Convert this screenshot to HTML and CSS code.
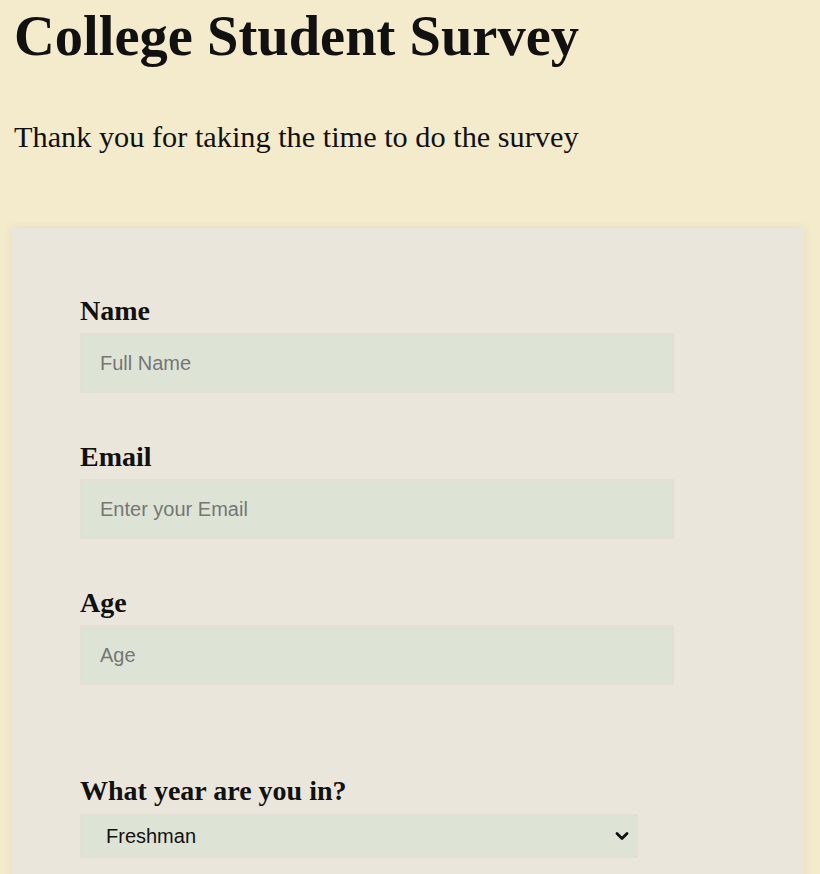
FILE: index.html
```html
<!DOCTYPE html>
<html lang="en">
<head>
<meta charset="utf-8">
<title>College Student Survey</title>
<link rel="stylesheet" href="styles.css">
</head>
<body>
  <header class="intro">
    <h1 class="title">College Student Survey</h1>
    <p class="description">Thank you for taking the time to do the survey</p>
  </header>
  <form class="survey">
    <div class="field">
      <label class="label" for="name">Name</label>
      <input class="input" id="name" type="text" placeholder="Full Name">
    </div>
    <div class="field">
      <label class="label" for="email">Email</label>
      <input class="input" id="email" type="email" placeholder="Enter your Email">
    </div>
    <div class="field">
      <label class="label" for="age">Age</label>
      <input class="input" id="age" type="number" placeholder="Age">
    </div>
    <div class="field field-select">
      <label class="label" for="year">What year are you in?</label>
      <div class="select-wrap">
        <select class="select" id="year">
          <option>Freshman</option>
          <option>Sophomore</option>
          <option>Junior</option>
          <option>Senior</option>
        </select>
        <svg class="chevron" width="16" height="10" viewBox="0 0 16 10" aria-hidden="true">
          <path d="M3 2.5 L8 7.5 L13 2.5" fill="none" stroke="#111" stroke-width="2.8" stroke-linecap="round" stroke-linejoin="round"/>
        </svg>
      </div>
    </div>
  </form>
</body>
</html>
```

FILE: styles.css
```css
* {
  box-sizing: border-box;
}

html, body {
  height: 100%;
}

body {
  margin: 0;
  padding: 4px 16px 0 12px;
  background: #f4ebcc;
  color: #111;
  font-family: "Liberation Serif", "Times New Roman", serif;
  overflow: hidden;
}

.intro {
  padding-left: 2px;
}

.title {
  margin: 0;
  font-size: 56.5px;
  line-height: 64px;
  font-weight: 700;
}

.description {
  margin: 51px 0 0;
  font-size: 30.3px;
  line-height: 36px;
  font-weight: 400;
}

.survey {
  margin-top: 73px;
  padding: 68px 68px 40px;
  background: #ebe6dc;
  box-shadow: 0 0 8px rgba(120, 110, 90, 0.12);
  min-height: 700px;
}

.field {
  display: flex;
  flex-direction: column;
  align-items: flex-start;
  margin-bottom: 49px;
}

.field-select {
  margin-top: 91px;
}

.label {
  display: block;
  font-size: 28px;
  line-height: 30px;
  font-weight: 700;
  margin-bottom: 7px;
}

.input {
  width: 594px;
  height: 60px;
  padding: 0 18px;
  border: 2px solid #e4dfd4;
  background: #dde4d5;
  font-family: "Liberation Sans", Arial, sans-serif;
  font-size: 20px;
  color: #333;
  outline: none;
}

.input::placeholder {
  color: #767676;
}

.input[type="number"]::-webkit-inner-spin-button,
.input[type="number"]::-webkit-outer-spin-button {
  -webkit-appearance: none;
  margin: 0;
}

.select-wrap {
  position: relative;
  width: 558px;
  margin-top: 1px;
}

.select {
  -webkit-appearance: none;
  appearance: none;
  width: 100%;
  height: 44px;
  padding: 0 24px;
  border: 2px solid #e4dfd4;
  border-radius: 0;
  background: #dde4d5;
  font-family: "Liberation Sans", Arial, sans-serif;
  font-size: 20px;
  color: #111;
  outline: none;
}

.chevron {
  position: absolute;
  right: 8px;
  top: 17px;
  pointer-events: none;
}
```
